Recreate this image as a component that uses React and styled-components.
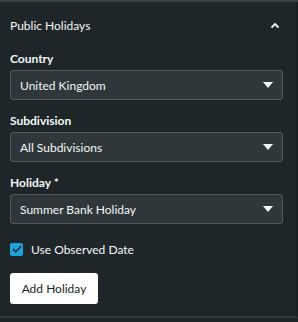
import React, { useState } from "react";
import styled, { createGlobalStyle } from "styled-components";

const GlobalStyle = createGlobalStyle`
  html, body {
    margin: 0;
    padding: 0;
    background: #1f2629;
  }
  body {
    font-family: Lato, "Open Sans", sans-serif;
    -webkit-font-smoothing: antialiased;
  }
`;

const Frame = styled.div`
  width: 298px;
  height: 322px;
  box-sizing: border-box;
  background: #1f2629;
  border-top: 2px solid #3a4044;
  display: flex;
  flex-direction: column;
`;

const Panel = styled.section`
  flex: none;
  border-right: 2px solid #192022;
  border-bottom: 2px solid #353b3f;
  padding: 0 13px 12px 10px;
  color: #f4f6f7;
`;

const Header = styled.div`
  height: 46px;
  margin-bottom: 2px;
  display: flex;
  align-items: center;
  justify-content: space-between;
  font-size: 12px;
  padding-right: 3px;
`;

const Field = styled.div`
  display: flex;
  flex-direction: column;
  gap: 3px;
  margin-bottom: 12px;
`;

const Label = styled.label`
  font-size: 12px;
  font-weight: 700;
  line-height: 17px;
`;

const SelectBox = styled.div`
  height: 30px;
  box-sizing: border-box;
  border: 1px solid #52595d;
  border-radius: 3px;
  background: #30373a;
  display: flex;
  align-items: center;
  justify-content: space-between;
  padding: 0 9px 0 9px;
  font-size: 12px;
`;

const CheckRow = styled.label`
  display: flex;
  align-items: center;
  gap: 8px;
  font-size: 12px;
  height: 18px;
  margin: 16px 0 15px;
`;

const Box = styled.span`
  width: 13px;
  height: 13px;
  border-radius: 2px;
  background: #1aa3dc;
  display: flex;
  align-items: center;
  justify-content: center;
`;

const Button = styled.button`
  display: block;
  width: 88px;
  height: 31px;
  border: none;
  border-radius: 3px;
  background: #ffffff;
  color: #1b1f22;
  font-family: inherit;
  font-size: 12px;
  padding: 0;
`;

const Caret = () => (
  <svg width="10" height="6" viewBox="0 0 10 6">
    <path d="M0 0h10L5 6z" fill="#f4f6f7" />
  </svg>
);

const Chevron = () => (
  <svg width="10" height="7" viewBox="0 0 10 7">
    <path d="M1.5 5.5L5 2l3.5 3.5" fill="none" stroke="#f4f6f7" strokeWidth="1.8" />
  </svg>
);

const Select = ({ label, value }) => (
  <Field>
    <Label>{label}</Label>
    <SelectBox>
      <span>{value}</span>
      <Caret />
    </SelectBox>
  </Field>
);

export default function App() {
  const [checked] = useState(true);
  return (
    <>
      <GlobalStyle />
      <Frame>
        <Panel>
          <Header>
            <span>Public Holidays</span>
            <Chevron />
          </Header>
          <Select label="Country" value="United Kingdom" />
          <Select label="Subdivision" value="All Subdivisions" />
          <Select label="Holiday *" value="Summer Bank Holiday" />
          <CheckRow>
            <Box>
              {checked && (
                <svg width="10" height="8" viewBox="0 0 10 8">
                  <path d="M1 4l2.8 2.8L9 1.2" fill="none" stroke="#1b2a33" strokeWidth="1.6" />
                </svg>
              )}
            </Box>
            Use Observed Date
          </CheckRow>
          <Button>Add Holiday</Button>
        </Panel>
      </Frame>
    </>
  );
}
